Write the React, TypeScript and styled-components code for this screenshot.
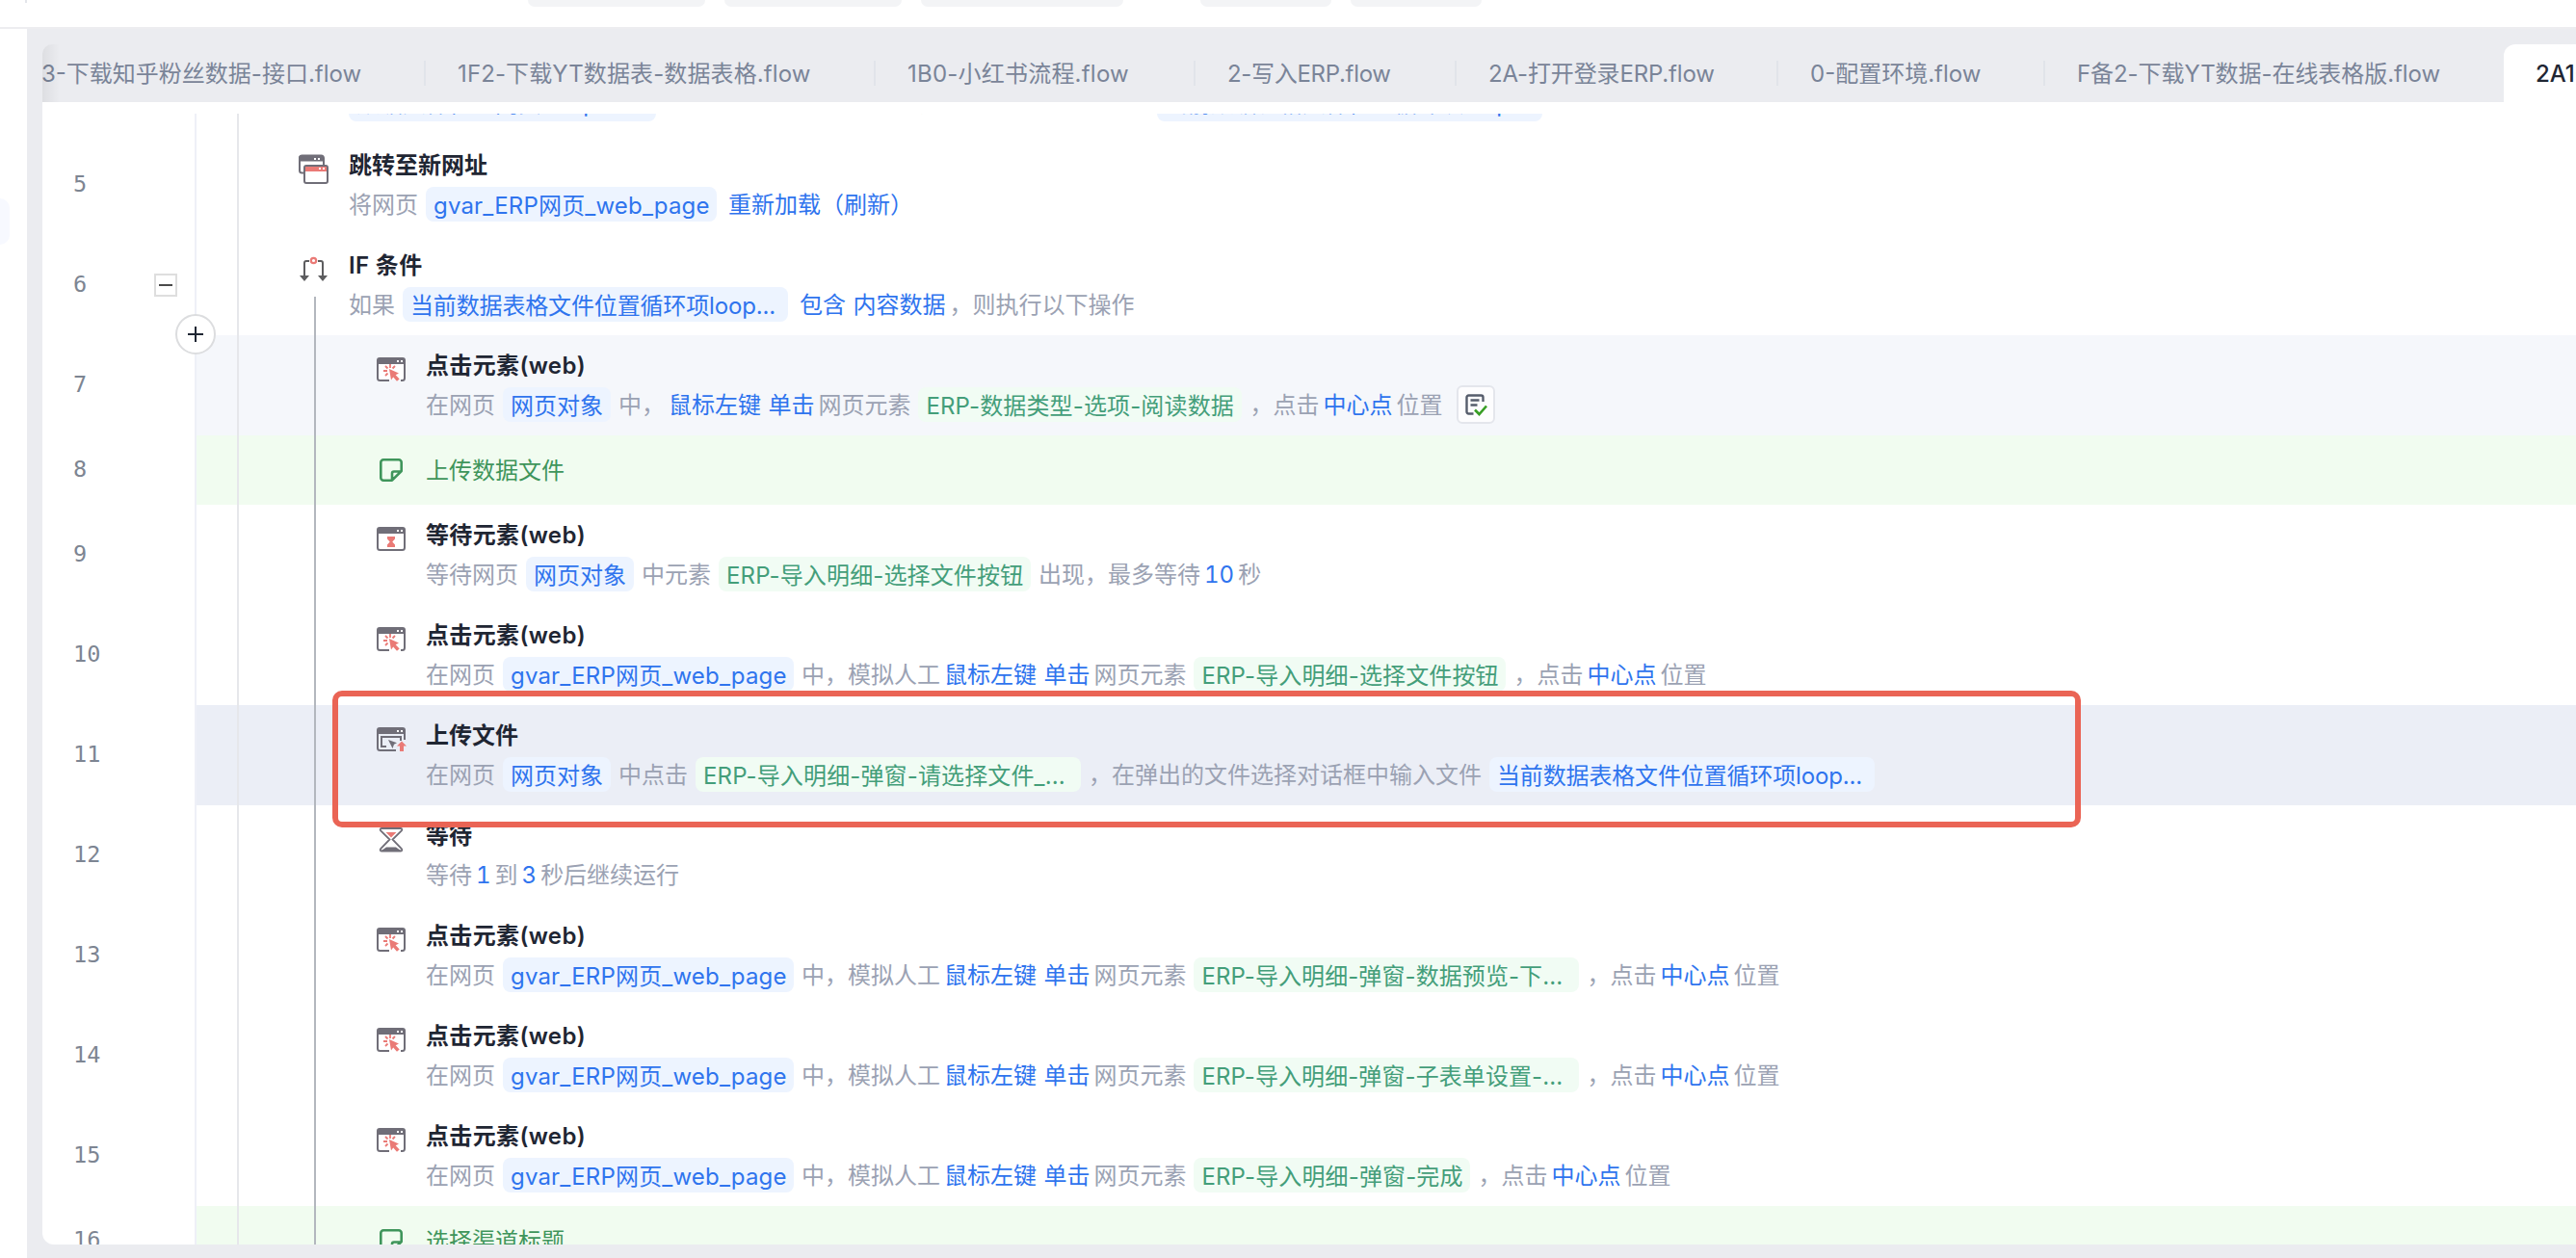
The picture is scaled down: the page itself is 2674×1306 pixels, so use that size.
import React from "react";
import styled, { createGlobalStyle } from "styled-components";

const GlobalStyle = createGlobalStyle`
  *, *::before, *::after { box-sizing: border-box; }
  body { margin: 0; background: #fff; font-family: Inter, "Noto Sans CJK SC", sans-serif; font-size: 24px; }
`;

/* ---------- frame ---------- */
const Page = styled.div`
  position: relative;
  width: 2674px;
  height: 1306px;
  overflow: hidden;
  display: flex;
  flex-direction: column;
  background: #fff;
`;
const Toolbar = styled.div`
  height: 30px;
  flex: none;
  display: flex;
  align-items: flex-start;
  border-bottom: 2px solid #ededf0;
`;
const ToolbarDivider = styled.i`
  width: 2px;
  height: 3px;
  margin: 0 520px 0 26px;
  background: #e3e5ea;
`;
const ToolButton = styled.span<{ $w: number; $gap: number }>`
  width: ${(p) => p.$w}px;
  height: 7px;
  margin-right: ${(p) => p.$gap}px;
  border-radius: 0 0 8px 8px;
  background: #f3f4f6;
`;
const Body = styled.div`
  flex: 1;
  min-height: 0;
  display: flex;
`;
const SideBar = styled.aside`
  width: 28px;
  flex: none;
  padding-top: 176px;
`;
const SideItem = styled.div`
  width: 10px;
  height: 48px;
  border-radius: 0 10px 10px 0;
  background: #f7f9ff;
`;
const Workspace = styled.main`
  flex: 1;
  min-width: 0;
  padding: 16px 0 14px 16px;
  background: #ebecf0;
  display: flex;
  flex-direction: column;
`;

/* ---------- tabs ---------- */
const TabBar = styled.nav`
  position: relative;
  height: 60px;
  flex: none;
  display: flex;
  align-items: center;
  overflow: hidden;
  border-radius: 10px 0 0 0;
`;
const TabFade = styled.div`
  position: absolute;
  left: 0;
  top: 0;
  width: 18px;
  height: 60px;
  background: linear-gradient(90deg, rgba(0, 0, 0, 0.06), rgba(0, 0, 0, 0));
`;
const Tab = styled.div<{ $w: number; $ls: number; $first?: boolean; $last?: boolean }>`
  width: ${(p) => p.$w}px;
  height: 26px;
  flex: none;
  padding-left: ${(p) => (p.$first ? 0 : 33)}px;
  border-right: 2px solid ${(p) => (p.$last ? "transparent" : "#e1e4ea")};
  line-height: 28px;
  letter-spacing: ${(p) => p.$ls}px;
  text-indent: ${(p) => (p.$first ? -1 : 0)}px;
  white-space: nowrap;
  color: #7a8498;
`;
const ActiveTab = styled.div`
  height: 60px;
  flex: 1;
  padding-left: 33px;
  border-radius: 12px 0 0 0;
  background: #fff;
  line-height: 62px;
  font-weight: 500;
  white-space: nowrap;
  overflow: hidden;
  color: #1f2633;
`;

/* ---------- flow list ---------- */
const Panel = styled.section`
  flex: 1;
  min-height: 0;
  padding-top: 12px;
  border-radius: 0 0 0 12px;
  background: #fff;
  display: flex;
  overflow: hidden;
`;
const Scroller = styled.div`
  flex: 1;
  overflow: hidden;
`;
const List = styled.div`
  margin-top: -82px;
`;
const Row = styled.div<{ $h?: number }>`
  height: ${(p) => p.$h ?? 104}px;
  display: flex;
`;
const Gutter = styled.div`
  position: relative;
  width: 160px;
  flex: none;
  padding: 0 18px 0 32px;
  display: flex;
  align-items: center;
  justify-content: space-between;
  border-right: 2px solid #eef0f7;
`;
const StepNumber = styled.span`
  padding-bottom: 2px;
  font-family: "DejaVu Sans Mono", monospace;
  font-size: 23.5px;
  color: #7d8592;
`;
const Collapse = styled.span`
  width: 24px;
  height: 24px;
  display: flex;
  align-items: center;
  justify-content: center;
  border: 2px solid #dedede;
  &::after { content: ""; width: 14px; height: 2px; background: #4a4a4a; }
`;
const InsertButton = styled.span`
  position: absolute;
  z-index: 2;
  left: 138px;
  top: -22px;
  width: 42px;
  height: 42px;
  display: flex;
  align-items: center;
  justify-content: center;
  border: 2px solid #dcdddf;
  border-radius: 50%;
  background: #fff;
`;
const tones = { plain: "#fff", hover: "#f5f7fb", active: "#ebeef6", note: "#f1fcf0" };
type Tone = keyof typeof tones;
const Content = styled.div<{ $tone: Tone }>`
  flex: 1;
  min-width: 0;
  display: flex;
  background: ${(p) => tones[p.$tone]};
`;
const Guide = styled.i<{ $w: number; $c: string }>`
  width: ${(p) => p.$w}px;
  flex: none;
  border-right: 2px solid ${(p) => p.$c};
`;
const IconColumn = styled.div<{ $indent: number }>`
  width: 32px;
  flex: none;
  margin: 0 20px 0 ${(p) => p.$indent}px;
  padding-top: 20px;
  display: flex;
  flex-direction: column;
  svg { display: block; flex: none; }
`;
const Stem = styled.i<{ $gap: number; $light?: boolean }>`
  flex: 1;
  width: 2px;
  margin: ${(p) => p.$gap}px 0 0 16px;
  background: ${(p) => (p.$light ? "#e6e7eb" : "#b3b7be")};
`;
const Texts = styled.div`
  padding-top: 14px;
  white-space: nowrap;
`;
const Title = styled.div<{ $latin: boolean }>`
  height: 34px;
  margin-bottom: 6px;
  line-height: 36px;
  font-weight: 600;
  letter-spacing: ${(p) => (p.$latin ? 0.35 : 0)}px;
  color: #1f2633;
`;
const Plain = styled.span`
  padding-top: 2px;
`;
const Note = styled.div`
  line-height: 74px;
  color: #3f955b;
`;
const Tag = styled.span<{ $green?: boolean; $w?: number; $ls: number }>`
  height: 36px;
  width: ${(p) => (p.$w ? p.$w + "px" : "auto")};
  margin: 0 8px;
  padding: 2px 8px 0;
  border-radius: 8px;
  line-height: 36px;
  letter-spacing: ${(p) => p.$ls}px;
  background: ${(p) => (p.$green ? "#f1fcf4" : "#edf4ff")};
  color: ${(p) => (p.$green ? "#449e7a" : "#2f74ee")};
`;
const Desc = styled.div<{ $lift?: boolean }>`
  height: 36px;
  display: flex;
  align-items: center;
  line-height: 36px;
  color: #9ba2b3;
  ${Plain} { padding: ${(p) => (p.$lift ? "0 0 3px" : "2px 0 0")}; }
  ${Tag} { padding-top: ${(p) => (p.$lift ? 0 : 2)}px; }
`;
const Link = styled.span`
  padding-top: 2px;
  margin: 0 4px;
  white-space: pre;
  word-spacing: 1px;
  font-variant-numeric: tabular-nums;
  color: #2f74ee;
`;
const CheckButton = styled.span`
  width: 40px;
  height: 40px;
  margin-left: 15px;
  display: flex;
  align-items: center;
  justify-content: center;
  border: 2px solid #e4e6ec;
  border-radius: 6px;
  background: #fdfdfe;
`;
const Highlight = styled.div`
  position: absolute;
  left: 345px;
  top: 717px;
  width: 1815px;
  height: 142px;
  border: 6px solid #ea6455;
  border-radius: 10px;
`;

/* ---------- icons (32 x 32) ---------- */
const G = "#706e78";
const R = "#ea7a76";
const Frame = ({ open }: { open?: boolean }) => (
  <>
    <path d={open ? "M14 27H4.500a2.500 2.500 0 0 1-2.500-2.500V8M30 8v16.500a2.500 2.500 0 0 1-2.500 2.500H26" : "M2 8v16.500a2.500 2.500 0 0 0 2.500 2.500h23a2.500 2.500 0 0 0 2.500-2.500V8"} fill="none" stroke={G} strokeWidth="2" />
    <path d="M1 10V6a3 3 0 0 1 3-3h24a3 3 0 0 1 3 3v4z" fill={G} />
    <path d="M22 6h2v2h-2zM26 6h2v2h-2z" fill="#fff" />
  </>
);
const ClickIcon = () => (
  <svg width="32" height="32" viewBox="0 0 32 32">
    <path d="M2 9h28v17H2z" fill="#fff" />
    <Frame open />
    <path d="M14 15l10 4.500-3.300 1.700 4 4.200-2.700 2.300-3.800-4.200-2.200 3z" fill={R} />
    <path d="M15 10v4M10 12l2.500 2.500M8 17h4M10 22l2.500-2.500M20 12l-2.500 2.500" stroke={R} strokeWidth="1.800" />
  </svg>
);
const WaitElementIcon = () => (
  <svg width="32" height="32" viewBox="0 0 32 32">
    <Frame />
    <path d="M12 13h8v2.500L17.300 18.500 20 21.500V24h-8v-2.500l2.700-3L12 15.500z" fill={R} />
  </svg>
);
const UploadIcon = () => (
  <svg width="32" height="32" viewBox="0 0 32 32">
    <path d="M21 27H4.500a2.500 2.500 0 0 1-2.500-2.500V8M30 8v8" fill="none" stroke={G} strokeWidth="2" />
    <path d="M1 10V6a3 3 0 0 1 3-3h24a3 3 0 0 1 3 3v4z" fill={G} />
    <path d="M22 6h2v2h-2zM26 6h2v2h-2z" fill="#fff" />
    <path d="M11 23H6V13h20v4" fill="none" stroke={G} strokeWidth="2" />
    <path d="M13 16l9 3.300-3 1.400-1.500 4.300z" fill={G} />
    <path d="M27 17.500l5 5h-3V28h-4v-5.500h-3z" fill={R} />
  </svg>
);
const HourglassIcon = () => (
  <svg width="32" height="32" viewBox="0 0 32 32">
    <path d="M6 4h20c1.600 0 1.600 1.500.8 2.500L17.500 15.500 26.800 25c.8 1 .8 2.500-.8 2.500H6c-1.600 0-1.600-1.500-.8-2.500L14.500 15.500 5.200 6.500C4.400 5.500 4.400 4 6 4z" fill="#fff" stroke={G} strokeWidth="1.800" />
    <path d="M10.500 8h11L16 13.500z" fill={R} />
    <path d="M6 27l5-3.500h10l5 3.500z" fill={G} />
  </svg>
);
const NoteIcon = () => (
  <svg width="32" height="32" viewBox="0 0 32 32" fill="none" stroke="#3f955b" strokeWidth="2.600" strokeLinejoin="round">
    <path d="M17 26.700H8a2.700 2.700 0 0 1-2.700-2.700V8A2.700 2.700 0 0 1 8 5.300h16A2.700 2.700 0 0 1 26.700 8v9L17 26.700v-7.200a2 2 0 0 1 2-2h7.500" />
  </svg>
);
const JumpIcon = () => (
  <svg width="32" height="32" viewBox="0 0 32 32">
    <path d="M6 19.500H3.500A2.500 2.500 0 0 1 1 17V4a2.500 2.500 0 0 1 2.500-2.500h20A2.500 2.500 0 0 1 26 4v7" fill="#fff" stroke={G} strokeWidth="2" />
    <path d="M0 7.500V4a3 3 0 0 1 3-3h20a3 3 0 0 1 3 3v3.500z" fill={G} />
    <path d="M16 4h2v2h-2zM20 4h2v2h-2z" fill="#fff" />
    <rect x="6" y="12" width="24" height="18" rx="2" fill="#fff" stroke={G} strokeWidth="2" />
    <path d="M7 13h22v5H7z" fill={R} />
    <path d="M21 14h2v2h-2zM25 14h2v2h-2z" fill="#fff" />
  </svg>
);
const BranchIcon = () => (
  <svg width="32" height="32" viewBox="0 0 32 32">
    <path d="M11 7H8a2 2 0 0 0-2 2v14M20 7h3a2 2 0 0 1 2 2v14" fill="none" stroke="#5d5d5f" strokeWidth="2" />
    <path d="M1 22h10l-5 6zM20 22h10l-5 6z" fill="#5d5d5f" />
    <circle cx="15.500" cy="6.500" r="2.700" fill="#fff" stroke={R} strokeWidth="2.200" />
  </svg>
);
const CheckListIcon = () => (
  <svg width="24" height="24" viewBox="0 0 24 24" fill="none">
    <path d="M9.500 21.500H4.500a2 2 0 0 1-2-2v-15a2 2 0 0 1 2-2h13a2 2 0 0 1 2 2V9" stroke="#565d6c" strokeWidth="2.400" />
    <path d="M6.500 7.500h9M6.500 12.500h7" stroke="#565d6c" strokeWidth="2.400" />
    <path d="M11 17.500l4.500 4.500 7.500-8.500" stroke="#389e25" strokeWidth="2.600" />
  </svg>
);
const PlusIcon = () => (
  <svg width="18" height="18" viewBox="0 0 18 18">
    <path d="M9 1v16M1 9h16" stroke="#1f2633" strokeWidth="2" />
  </svg>
);

/* ---------- data ---------- */
type Seg = string | { k: "var" | "el" | "link" | "check"; t?: string; w?: number; ls?: number };
const v = (t: string, w?: number, ls = 0): Seg => ({ k: "var", t, w, ls });
const e = (t: string, w?: number, ls = 0.14): Seg => ({ k: "el", t, w, ls });
const l = (t: string): Seg => ({ k: "link", t });

type Step = {
  no?: number;
  level: 0 | 1 | 2;
  icon?: React.ReactNode;
  title?: string;
  desc?: Seg[];
  note?: string;
  tone?: Tone;
  collapse?: boolean;
  insert?: boolean;
};

const gvar = v("gvar_ERP网页_web_page", 302, 0.18);
const loopItem = v("当前数据表格文件位置循环项loop...", 400, -0.15);
const simulated = (el: Seg): Seg[] => ["在网页", gvar, "中，模拟人工", l("鼠标左键 单击"), "网页元素", el, "，点击", l("中心点"), "位置"];

const steps: Step[] = [
  { level: 0, desc: ["将获取", v("数据文件位置网页xls_path", 319), "文件夹下所有符合条件的，将文件列表依次存到", loopItem] },
  { no: 5, level: 1, icon: <JumpIcon />, title: "跳转至新网址", desc: ["将网页", gvar, l("重新加载（刷新）")] },
  { no: 6, level: 1, icon: <BranchIcon />, title: "IF 条件", collapse: true, desc: ["如果", loopItem, l("包含 内容数据"), "，则执行以下操作"] },
  { no: 7, level: 2, icon: <ClickIcon />, title: "点击元素(web)", tone: "hover", insert: true, desc: ["在网页", v("网页对象"), "中，", l("鼠标左键 单击"), "网页元素", e("ERP-数据类型-选项-阅读数据", 336), "，点击", l("中心点"), "位置", { k: "check" }] },
  { no: 8, level: 2, icon: <NoteIcon />, note: "上传数据文件", tone: "note" },
  { no: 9, level: 2, icon: <WaitElementIcon />, title: "等待元素(web)", desc: ["等待网页", v("网页对象"), "中元素", e("ERP-导入明细-选择文件按钮", 324), "出现，最多等待", l("10"), "秒"] },
  { no: 10, level: 2, icon: <ClickIcon />, title: "点击元素(web)", desc: simulated(e("ERP-导入明细-选择文件按钮", 324)) },
  { no: 11, level: 2, icon: <UploadIcon />, title: "上传文件", tone: "active", desc: ["在网页", v("网页对象"), "中点击", e("ERP-导入明细-弹窗-请选择文件_...", 400), "，在弹出的文件选择对话框中输入文件", loopItem] },
  { no: 12, level: 2, icon: <HourglassIcon />, title: "等待", desc: ["等待", l("1"), "到", l("3"), "秒后继续运行"] },
  { no: 13, level: 2, icon: <ClickIcon />, title: "点击元素(web)", desc: simulated(e("ERP-导入明细-弹窗-数据预览-下...", 400, 0.08)) },
  { no: 14, level: 2, icon: <ClickIcon />, title: "点击元素(web)", desc: simulated(e("ERP-导入明细-弹窗-子表单设置-...", 400, 0.08)) },
  { no: 15, level: 2, icon: <ClickIcon />, title: "点击元素(web)", desc: simulated(e("ERP-导入明细-弹窗-完成", 287)) },
  { no: 16, level: 2, icon: <NoteIcon />, note: "选择渠道标题", tone: "note" },
];

const tabs = [
  { name: "3-下载知乎粉丝数据-接口.flow", w: 398, ls: 0 },
  { name: "1F2-下载YT数据表-数据表格.flow", w: 467, ls: 0.12 },
  { name: "1B0-小红书流程.flow", w: 332, ls: 0.22 },
  { name: "2-写入ERP.flow", w: 271, ls: -0.3 },
  { name: "2A-打开登录ERP.flow", w: 334, ls: -0.15 },
  { name: "0-配置环境.flow", w: 277, ls: 0 },
  { name: "F备2-下载YT数据-在线表格版.flow", w: 476, ls: -0.06 },
];
const toolButtons = [
  { w: 184, gap: 20 },
  { w: 184, gap: 20 },
  { w: 210, gap: 80 },
  { w: 136, gap: 20 },
  { w: 136, gap: 0 },
];

const Segment = ({ seg }: { seg: Seg }) => {
  if (typeof seg === "string") return <Plain>{seg}</Plain>;
  if (seg.k === "link") return <Link>{seg.t}</Link>;
  if (seg.k === "check") return <CheckButton><CheckListIcon /></CheckButton>;
  return <Tag $green={seg.k === "el"} $w={seg.w} $ls={seg.ls ?? 0}>{seg.t}</Tag>;
};

const StepRow = ({ step }: { step: Step }) => (
  <Row $h={step.note ? 72 : 104}>
    <Gutter>
      <StepNumber>{step.no}</StepNumber>
      {step.collapse && <Collapse />}
      {step.insert && <InsertButton><PlusIcon /></InsertButton>}
    </Gutter>
    <Content $tone={step.tone ?? "plain"}>
      {step.level > 0 && <Guide $w={44} $c="#e6e7eb" />}
      {step.level > 1 && <Guide $w={80} $c="#b3b7be" />}
      <IconColumn $indent={step.level === 0 ? 26 : 62}>
        {step.icon}
        {step.collapse && <Stem $gap={12} />}
        {step.level === 0 && <Stem $gap={32} $light />}
      </IconColumn>
      {step.note ? (
        <Note>{step.note}</Note>
      ) : (
        <Texts>
          <Title $latin={/[A-Za-z]/.test(step.title ?? "")}>{step.title}</Title>
          <Desc $lift={step.level === 0}>{step.desc?.map((seg, i) => <Segment key={i} seg={seg} />)}</Desc>
        </Texts>
      )}
    </Content>
  </Row>
);

export default function App() {
  return (
    <Page>
      <GlobalStyle />
      <Toolbar>
        <ToolbarDivider />
        {toolButtons.map((b, i) => <ToolButton key={i} $w={b.w} $gap={b.gap} />)}
      </Toolbar>
      <Body>
        <SideBar><SideItem /></SideBar>
        <Workspace>
          <TabBar>
            {tabs.map((t, i) => (
              <Tab key={t.name} $w={t.w} $ls={t.ls} $first={i === 0} $last={i === tabs.length - 1}>{t.name}</Tab>
            ))}
            <ActiveTab>2A1-上传数据.flow</ActiveTab>
            <TabFade />
          </TabBar>
          <Panel>
            <Scroller>
              <List>{steps.map((s, i) => <StepRow key={i} step={s} />)}</List>
            </Scroller>
          </Panel>
        </Workspace>
      </Body>
      <Highlight />
    </Page>
  );
}
